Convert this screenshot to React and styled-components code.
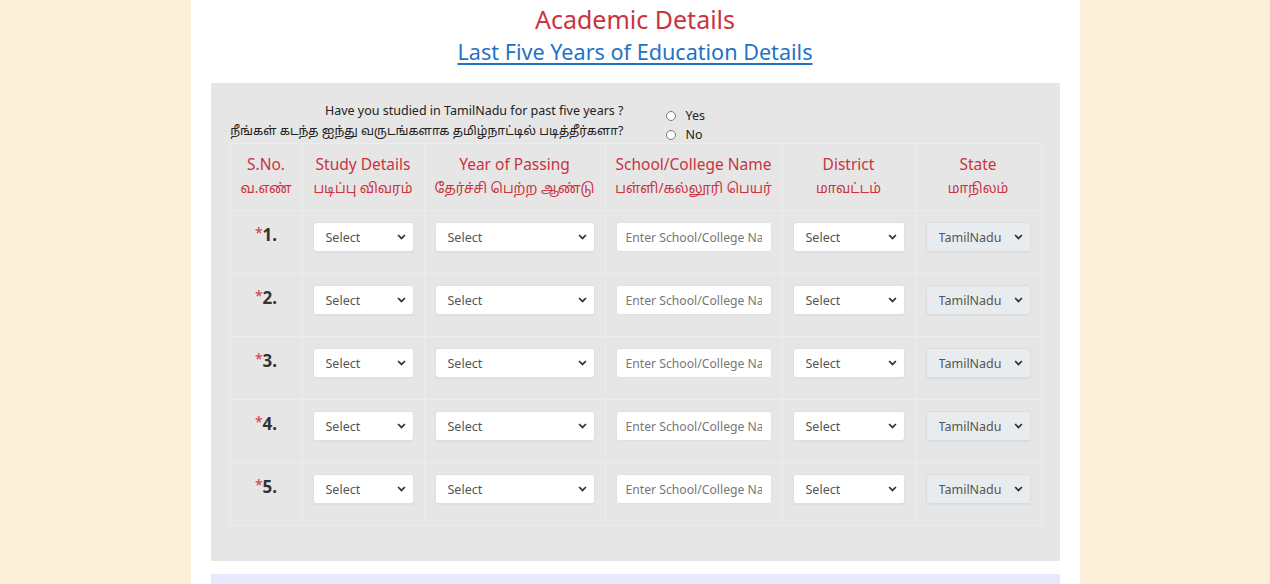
import React from 'react';
import styled, { createGlobalStyle } from 'styled-components';

const fontStack = `"Noto Sans", "Noto Sans Tamil", "Lohit Tamil", "Open Sans", sans-serif`;

const GlobalStyle = createGlobalStyle`
  html, body {
    margin: 0;
    padding: 0;
    background: #fcf0da;
    font-family: ${fontStack};
  }
`;

const Page = styled.div`
  width: 889px;
  min-height: 584px;
  margin: 0 auto;
  background: #ffffff;
  padding: 0 20px;
  box-sizing: border-box;
`;

const Title = styled.h2`
  margin: 0;
  padding-top: 2px;
  text-align: center;
  color: #c9343f;
  font-size: 25px;
  font-weight: 400;
  line-height: 34px;
`;

const SubTitle = styled.h3`
  margin: 0;
  text-align: center;
  font-size: 21.6px;
  font-weight: 400;
  line-height: 32px;

  a {
    color: #1f73c6;
    text-decoration: underline;
    text-underline-offset: 3px;
  }
`;

const Panel = styled.div`
  margin-top: 15px;
  background: #e6e6e6;
  padding: 18px 19px 35px;
`;

const Question = styled.div`
  display: flex;
  align-items: flex-start;
  height: 42px;
  font-size: 12.5px;
  color: #222;
`;

const QuestionText = styled.div`
  width: 394px;
  text-align: right;
  line-height: 20px;
  white-space: nowrap;
`;

const Tamil = styled.span`
  font-size: 12.4px;
`;

const Options = styled.div`
  padding: 5px 0 0 42px;
  display: flex;
  flex-direction: column;
`;

const Option = styled.label`
  display: flex;
  align-items: center;
  gap: 10px;
  height: 19px;
  font-size: 12.5px;
  color: #222;

  input {
    margin: 0;
    width: 10px;
    height: 10px;
  }
`;

const Table = styled.table`
  border-collapse: collapse;
  width: 811px;
  table-layout: fixed;
`;

const Th = styled.th`
  border: 1px solid #ececec;
  padding: 9px 0 11px;
  font-weight: 400;
  color: #c9343f;
  text-align: center;
  vertical-align: top;
  line-height: 23px;
  font-size: 15.5px;
  white-space: nowrap;

  span {
    display: block;
    font-size: 13.7px;
  }
`;

const Td = styled.td`
  border: 1px solid #ececec;
  padding: 11px 10px 21px;
  vertical-align: top;
  height: 30px;
  box-sizing: content-box;
`;

const SerialCell = styled(Td)`
  text-align: center;
  padding-top: 14px;
  padding-bottom: 18px;
  line-height: 20px;
`;

const Star = styled.span`
  color: #d9364a;
  font-size: 14px;
  line-height: 1;
  vertical-align: 3px;
`;

const Num = styled.span`
  color: #333;
  font-weight: 700;
  font-size: 17px;
`;

const SelectWrap = styled.div`
  position: relative;
  width: 100%;
  height: 30px;
`;

const Select = styled.select`
  appearance: none;
  display: block;
  width: 100%;
  height: 30px;
  box-sizing: border-box;
  border: 1px solid ${p => (p.disabled ? '#dcdcdc' : '#e0e0e0')};
  border-radius: 3px;
  background: ${p => (p.disabled ? '#e9ecef' : '#ffffff')};
  color: #555;
  font-family: ${fontStack};
  font-size: 12.5px;
  padding: 0 24px 0 12px;
  opacity: 1;
  box-shadow: 0 1px 1px rgba(0, 0, 0, 0.04);
`;

const Chevron = styled.svg`
  position: absolute;
  right: 8px;
  top: 11px;
  width: 9px;
  height: 8px;
  pointer-events: none;
`;

const Input = styled.input`
  display: block;
  width: 100%;
  height: 30px;
  box-sizing: border-box;
  border: 1px solid #e0e0e0;
  border-radius: 3px;
  background: #fff;
  font-family: ${fontStack};
  font-size: 12.2px;
  padding: 0 9px;
  color: #555;

  &::placeholder {
    color: #777;
  }
`;

const NextPanel = styled.div`
  margin-top: 13px;
  height: 20px;
  background: #e6e9fb;
`;

const Dropdown = ({ value = 'Select', disabled }) => (
  <SelectWrap>
    <Select disabled={disabled} defaultValue={value}>
      <option>{value}</option>
    </Select>
    <Chevron viewBox="0 0 10 7">
      <path d="M1.2 1.3 L5 5.1 L8.8 1.3" fill="none" stroke="#333" strokeWidth="1.9" />
    </Chevron>
  </SelectWrap>
);

const rows = [1, 2, 3, 4, 5];

export default function App() {
  return (
    <>
      <GlobalStyle />
      <Page>
        <Title>Academic Details</Title>
        <SubTitle>
          <a href="#">Last Five Years of Education Details</a>
        </SubTitle>
        <Panel>
          <Question>
            <QuestionText>
              Have you studied in TamilNadu for past five years ?
              <br />
              <Tamil>நீங்கள் கடந்த ஐந்து வருடங்களாக தமிழ்நாட்டில் படித்தீர்களா?</Tamil>
            </QuestionText>
            <Options>
              <Option>
                <input type="radio" name="tn" /> Yes
              </Option>
              <Option>
                <input type="radio" name="tn" /> No
              </Option>
            </Options>
          </Question>
          <Table>
            <colgroup>
              <col style={{ width: 72 }} />
              <col style={{ width: 122 }} />
              <col style={{ width: 181 }} />
              <col style={{ width: 177 }} />
              <col style={{ width: 133 }} />
              <col style={{ width: 126 }} />
            </colgroup>
            <thead>
              <tr>
                <Th>S.No.<span>வ.எண்</span></Th>
                <Th>Study Details<span>படிப்பு விவரம்</span></Th>
                <Th>Year of Passing<span>தேர்ச்சி பெற்ற ஆண்டு</span></Th>
                <Th>School/College Name<span>பள்ளி/கல்லூரி பெயர்</span></Th>
                <Th>District<span>மாவட்டம்</span></Th>
                <Th>State<span>மாநிலம்</span></Th>
              </tr>
            </thead>
            <tbody>
              {rows.map(n => (
                <tr key={n}>
                  <SerialCell>
                    <Star>*</Star>
                    <Num>{n}.</Num>
                  </SerialCell>
                  <Td><Dropdown /></Td>
                  <Td><Dropdown /></Td>
                  <Td><Input placeholder="Enter School/College Name" /></Td>
                  <Td><Dropdown /></Td>
                  <Td><Dropdown value="TamilNadu" disabled /></Td>
                </tr>
              ))}
            </tbody>
          </Table>
        </Panel>
        <NextPanel />
      </Page>
    </>
  );
}
